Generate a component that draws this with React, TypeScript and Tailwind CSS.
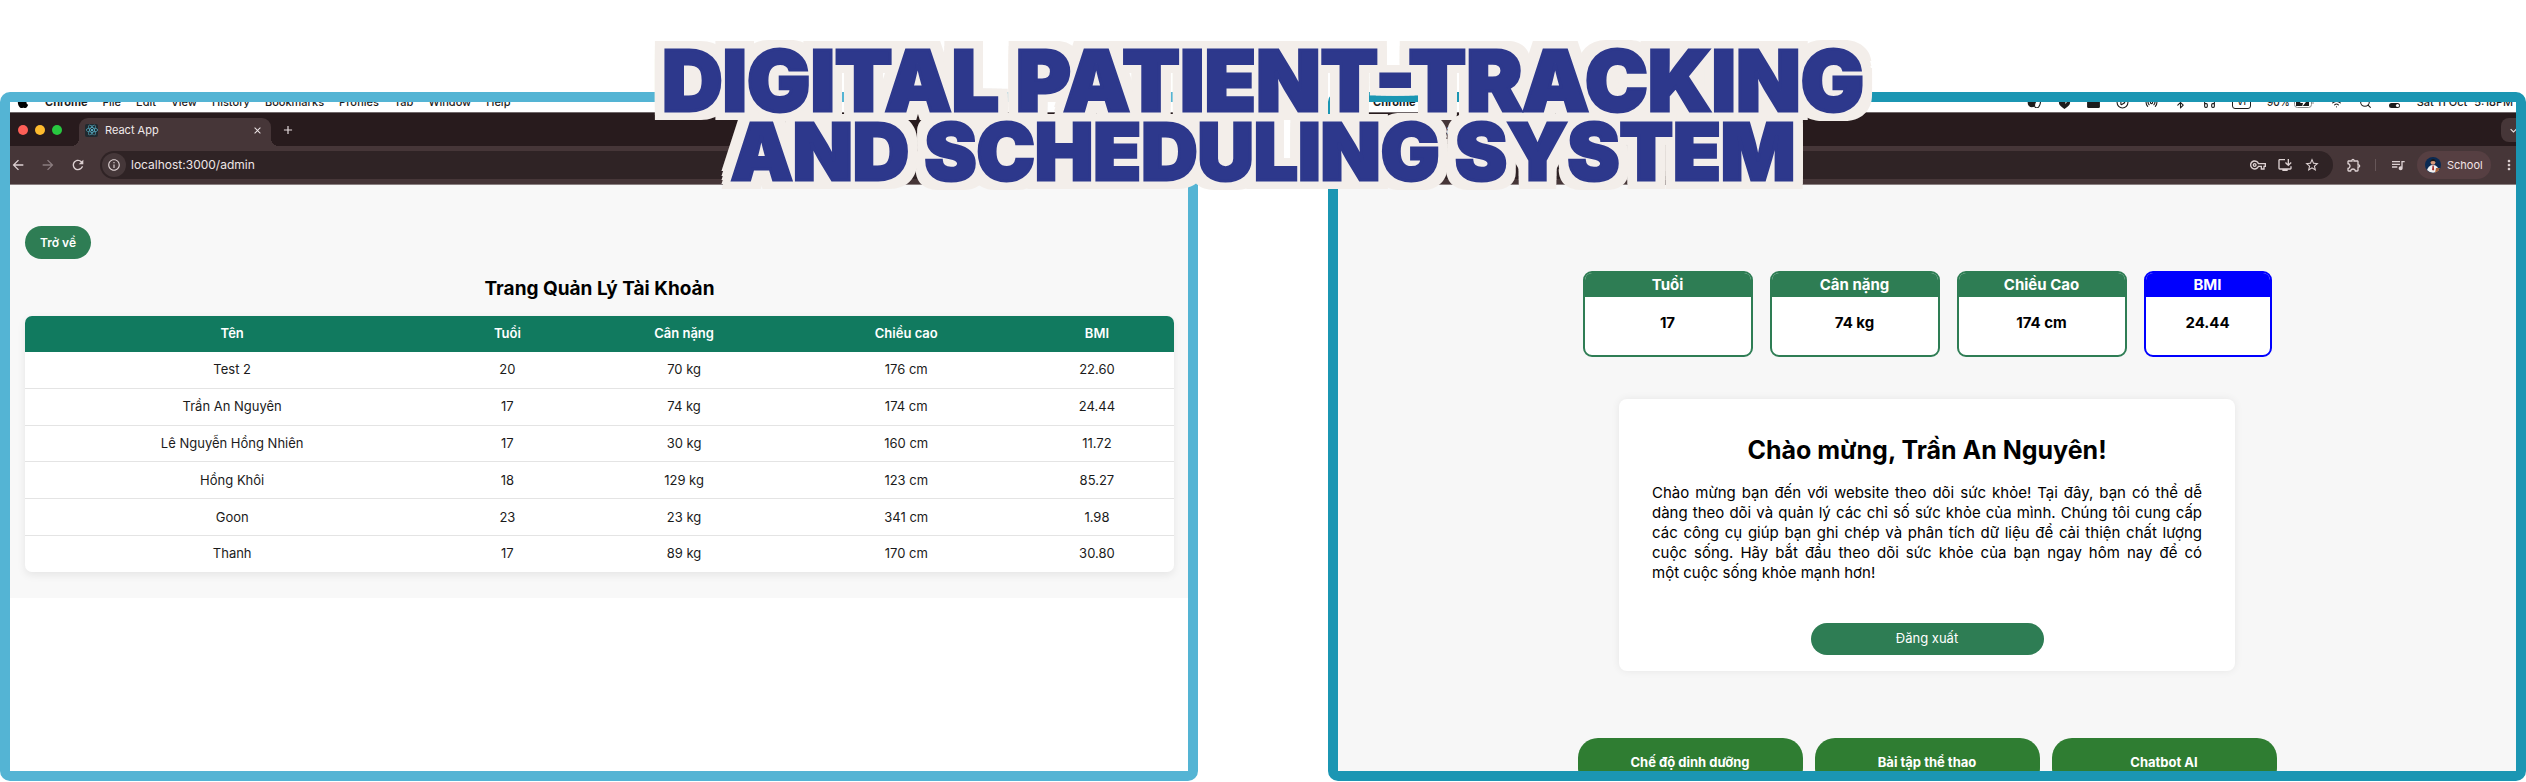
import React from "react";
import {
  MdArrowBack,
  MdArrowForward,
  MdRefresh,
  MdInfoOutline,
  MdOutlineVpnKey,
  MdOutlineInstallDesktop,
  MdStarBorder,
  MdOutlineExtension,
  MdQueueMusic,
  MdMoreVert,
  MdExpandMore,
  MdClose,
  MdAdd,
} from "react-icons/md";
import { FaApple, FaReact } from "react-icons/fa";
import {
  Bluetooth,
  CirclePlay,
  Headphones,
  Radio,
  Search,
  Wifi,
} from "lucide-react";

const allMenus = ["File", "Edit", "View", "History", "Bookmarks", "Profiles", "Tab", "Window", "Help"];

const accounts = [
  ["Test 2", "20", "70 kg", "176 cm", "22.60"],
  ["Trần An Nguyên", "17", "74 kg", "174 cm", "24.44"],
  ["Lê Nguyễn Hồng Nhiên", "17", "30 kg", "160 cm", "11.72"],
  ["Hồng Khôi", "18", "129 kg", "123 cm", "85.27"],
  ["Goon", "23", "23 kg", "341 cm", "1.98"],
  ["Thanh", "17", "89 kg", "170 cm", "30.80"],
];

function StatusItems() {
  return (
    <div className="flex items-center gap-4">
      <svg viewBox="0 0 16 14" className="h-[12px] w-[15px]">
        <circle cx="5" cy="8" r="5" fill="#1c1c1c" />
        <ellipse cx="11.5" cy="9" rx="3" ry="5" transform="rotate(20 11.5 9)" fill="#fff" stroke="#1c1c1c" strokeWidth="1.3" />
      </svg>
      <svg viewBox="0 0 14 14" className="h-[13px] w-[13px]">
        <path d="M1 1h12v6c0 3-3 5-6 7-3-2-6-4-6-7z" fill="#1c1c1c" />
        <path d="M8 2v7l3-5z" fill="#fff" />
      </svg>
      <svg viewBox="0 0 14 12" className="h-[11px] w-[13px]">
        <rect width="14" height="12" rx="1.5" fill="#1c1c1c" />
      </svg>
      <CirclePlay size={13} />
      <Radio size={13} />
      <Bluetooth size={13} />
      <Headphones size={13} />
      <span className="flex h-[13px] w-[19px] items-center justify-center rounded-[3px] border border-[#1c1c1c] text-[9px]">VI</span>
      <span className="flex items-center gap-1">
        <span className="text-[10px]">90%</span>
        <svg viewBox="0 0 20 11" className="h-[11px] w-[20px]">
          <rect x="0.5" y="0.5" width="17" height="10" rx="3" fill="#fff" stroke="#8a8a8a" />
          <path d="M2 2h13v7H2z" fill="#1c1c1c" />
          <path d="M9 1 6 6h3l-1 4 4-5H9z" fill="#fff" />
          <path d="M19 4v3" stroke="#8a8a8a" />
        </svg>
      </span>
      <Wifi size={13} />
      <Search size={13} />
      <svg viewBox="0 0 13 13" className="size-[13px]">
        <rect x="1" y="1" width="11" height="4.500" rx="2.200" fill="none" stroke="#1c1c1c" />
        <rect x="1" y="7" width="11" height="5" rx="2.500" fill="#1c1c1c" />
        <circle cx="9.500" cy="9.500" r="1.600" fill="#fff" />
      </svg>
      <span className="flex gap-[7px]">
        <span>Sat 11 Oct</span>
        <span>5:18PM</span>
      </span>
    </div>
  );
}

function MenuBar({ menus, tools }: { menus: string[]; tools: boolean }) {
  return (
    <div className="h-[11px] shrink-0 overflow-hidden border-b border-[#6f6769] bg-white">
      <div className="-mt-[11px] flex h-[22px] items-center justify-between whitespace-nowrap pr-[3px] pl-[6px] text-[11px] font-medium text-[#1c1c1c]">
        <div className="flex items-center gap-[15px]">
          <FaApple className="h-[14px] w-[14px] text-black" />
          <span className="font-bold">Chrome</span>
          {menus.map((m) => (
            <span key={m}>{m}</span>
          ))}
        </div>
        {tools && <StatusItems />}
      </div>
    </div>
  );
}

function TabStrip() {
  return (
    <div className="flex h-[33px] shrink-0 items-end justify-between overflow-hidden bg-[#281b1d]">
      <div className="flex items-end">
        <div className="flex h-8 items-center gap-[7px] pl-2">
          <span className="size-[10px] rounded-full bg-[#fe5f57]" />
          <span className="size-[10px] rounded-full bg-[#febb2e]" />
          <span className="size-[10px] rounded-full bg-[#28c840]" />
        </div>
        <div className="relative ml-[17px] flex h-7 w-[192px] items-center rounded-t-[9px] bg-[#463638] pr-2 pb-1 pl-[6px] before:absolute before:bottom-0 before:-left-2 before:size-2 before:bg-[radial-gradient(circle_at_0_0,transparent_8px,#463638_8px)] after:absolute after:-right-2 after:bottom-0 after:size-2 after:bg-[radial-gradient(circle_at_100%_0,transparent_8px,#463638_8px)]">
          <span className="flex size-[13px] items-center justify-center rounded-[2px] bg-[#20292f]">
            <FaReact className="size-[12px] text-[#5fc4dd]" />
          </span>
          <span className="ml-[7px] flex-1 text-[11px] leading-4 text-[#f0e9ea]">React App</span>
          <button aria-label="Close tab" className="text-[#f0e9ea]">
            <MdClose size={11} />
          </button>
        </div>
        <button aria-label="New tab" className="ml-[10px] flex h-8 items-center text-[#e6dcdd]">
          <MdAdd size={14} />
        </button>
      </div>
      <button aria-label="Search tabs" className="-mr-[10px] mb-1 flex h-6 w-[25px] items-center justify-center rounded-lg bg-[#463638] text-[#f0e9ea]">
        <MdExpandMore size={13} />
      </button>
    </div>
  );
}

function Toolbar({ url, tools }: { url: string; tools: boolean }) {
  return (
    <div className="flex h-[39px] shrink-0 items-center overflow-hidden border-b border-[#897f80] bg-[#463638] text-[#ddd1d2]">
      <div className="flex items-center gap-[14px] pr-[14px]">
        <button aria-label="Back"><MdArrowBack size={16} /></button>
        <button aria-label="Forward" className="text-[#8b7d7f]"><MdArrowForward size={16} /></button>
        <button aria-label="Reload"><MdRefresh size={16} /></button>
      </div>
      <div className="flex h-7 flex-1 items-center rounded-full bg-[#2f2325] pr-[13px] pl-[2px]">
        <span className="flex size-6 items-center justify-center rounded-full bg-[#453739]">
          <MdInfoOutline size={14} />
        </span>
        <input
          aria-label="Address"
          readOnly
          value={url}
          className="ml-[5px] min-w-0 flex-1 bg-transparent text-[12px] text-[#eee5e6] outline-none"
        />
        {tools && (
          <div className="flex items-center gap-[11px]">
            <MdOutlineVpnKey size={16} />
            <MdOutlineInstallDesktop size={16} />
            <MdStarBorder size={16} />
          </div>
        )}
      </div>
      {tools && (
        <div className="flex items-center">
          <button aria-label="Extensions" className="ml-[13px]"><MdOutlineExtension size={16} /></button>
          <span className="ml-[13px] h-3 w-px bg-[#665658]" />
          <button aria-label="Media" className="ml-[14px]"><MdQueueMusic size={16} /></button>
          <button className="ml-[11px] flex h-7 w-[74px] items-center gap-[6px] rounded-full bg-[#563f42] pl-2 text-[11px] text-[#f3e4e6]">
            <svg viewBox="0 0 16 16" className="size-4 shrink-0">
              <circle cx="8" cy="8" r="8" fill="#0b2a52" />
              <path d="M2 13c1-3 3-5 6-5s5 2 6 5a8 8 0 0 1-12 0z" fill="#f2f2f2" />
              <path d="M11 11l4 0a8 8 0 0 1-5 5z" fill="#a8623a" />
              <circle cx="8" cy="5.4" r="2.4" fill="#d99a7a" />
              <path d="M5.4 5c0-4 5.4-4 5.4 0-1.5-1.5-4-1.5-5.4 0z" fill="#1a1a1a" />
              <path d="M7.5 8.5h1.2l.4 4-1 1.2-1-1.2z" fill="#a02a2a" />
            </svg>
            School
          </button>
          <button aria-label="More" className="ml-[10px] w-[15px]"><MdMoreVert size={16} /></button>
        </div>
      )}
    </div>
  );
}

type FrameProps = {
  className: string;
  menus: string[];
  url: string;
  tools?: boolean;
  children: React.ReactNode;
};

function BrowserFrame({ className, menus, url, tools = false, children }: FrameProps) {
  return (
    <section className={`flex min-w-0 flex-1 flex-col overflow-hidden rounded-[10px] border-10 bg-white ${className}`}>
      <MenuBar menus={menus} tools={tools} />
      <TabStrip />
      <Toolbar url={url} tools={tools} />
      {children}
    </section>
  );
}

function AdminPage() {
  return (
    <div className="bg-[#f8f8f8] pt-[41px] pr-[14px] pb-[26px] pl-[15px]">
      <button className="h-[33px] w-[66px] rounded-[17px] bg-[#2e7d54] text-[12px] font-semibold text-white">Trở về</button>
      <h1 className="mt-4 mb-[13px] text-center text-[19px] leading-7 font-bold">Trang Quản Lý Tài Khoản</h1>
      <div className="overflow-hidden rounded-[7px] bg-white shadow-[0_3px_8px_rgba(0,0,0,0.08)]">
        <table className="h-[256px] w-full table-fixed border-collapse text-center text-[13px] text-[#1b1b1b]">
          <colgroup>
            <col className="w-[414px]" />
            <col className="w-[136px]" />
            <col className="w-[217px]" />
            <col className="w-[227px]" />
            <col className="w-[154px]" />
          </colgroup>
          <thead>
            <tr className="h-9 bg-[#117a5f] text-white">
              {["Tên", "Tuổi", "Cân nặng", "Chiều cao", "BMI"].map((h) => (
                <th key={h} className="h-9 font-semibold">{h}</th>
              ))}
            </tr>
          </thead>
          <tbody>
            {accounts.map((row) => (
              <tr key={row[0]} className="border-b border-[#e4e4e4] last:border-b-0">
                {row.map((cell, i) => (
                  <td key={i}>{cell}</td>
                ))}
              </tr>
            ))}
          </tbody>
        </table>
      </div>
    </div>
  );
}

function StatCard({ label, value, frame, head }: { label: string; value: string; frame: string; head: string }) {
  return (
    <div className={`flex h-[86px] flex-col overflow-hidden rounded-[9px] border-2 bg-white text-center text-[15px] font-bold ${frame}`}>
      <div className={`h-6 leading-6 text-white ${head}`}>{label}</div>
      <div className="mt-4 leading-5">{value}</div>
    </div>
  );
}

function HomePage() {
  return (
    <div className="flex flex-1 shrink-0 flex-col items-center bg-[#f7f7f7] pt-[86px]">
      <div className="flex gap-[17px]">
        <StatCard label="Tuổi" value="17" frame="w-[170px] border-[#2e7d54]" head="bg-[#2e7d54]" />
        <StatCard label="Cân nặng" value="74 kg" frame="w-[170px] border-[#2e7d54]" head="bg-[#2e7d54]" />
        <StatCard label="Chiều Cao" value="174 cm" frame="w-[170px] border-[#2e7d54]" head="bg-[#2e7d54]" />
        <StatCard label="BMI" value="24.44" frame="w-[128px] border-[#0000fe]" head="bg-[#0000fe]" />
      </div>
      <div className="mt-[42px] flex w-[616px] flex-col items-center rounded-[8px] bg-white px-[33px] pt-[34px] pb-4 shadow-[0_0_8px_rgba(0,0,0,0.07)]">
        <h2 className="text-[25px] leading-[34px] font-bold">Chào mừng, Trần An Nguyên!</h2>
        <p className="mt-4 text-justify text-[15px] leading-5">
          Chào mừng bạn đến với website theo dõi sức khỏe! Tại đây, bạn có thể dễ dàng theo dõi và quản lý các chỉ số
          sức khỏe của mình. Chúng tôi cung cấp các công cụ giúp bạn ghi chép và phân tích dữ liệu để cải thiện chất
          lượng cuộc sống. Hãy bắt đầu theo dõi sức khỏe của bạn ngay hôm nay để có một&nbsp;cuộc sống khỏe mạnh hơn!
        </p>
        <button className="mt-10 h-8 w-[233px] rounded-full bg-[#2e7d54] text-[13px] text-white">Đăng xuất</button>
      </div>
      <div className="mt-[67px] flex gap-3">
        {["Chế độ dinh dưỡng", "Bài tập thể thao", "Chatbot AI"].map((t) => (
          <button key={t} className="h-[50px] w-[225px] rounded-[20px] bg-[#2f7d32] text-[13px] font-bold text-white">
            {t}
          </button>
        ))}
      </div>
    </div>
  );
}

export default function App() {
  return (
    <main className="relative flex h-screen gap-[130px] overflow-hidden bg-white pt-[92px] pb-px font-['Inter',sans-serif] text-black">
      <BrowserFrame className="border-[#54b4d4]" menus={allMenus} url="localhost:3000/admin">
        <AdminPage />
      </BrowserFrame>
      <BrowserFrame className="border-[#1b96b3]" menus={["File"]} url="" tools>
        <HomePage />
      </BrowserFrame>
      <h1 className="absolute inset-x-0 top-[45px] text-center leading-[71px] font-black text-[#2d388c] [-webkit-text-stroke:3px_#2d388c] [text-shadow:11px_0_#f3eeea,-11px_0_#f3eeea,0_9px_#f3eeea,0_-9px_#f3eeea,11px_9px_#f3eeea,-11px_9px_#f3eeea,11px_-9px_#f3eeea,-11px_-9px_#f3eeea,5px_9px_#f3eeea,-5px_9px_#f3eeea,5px_-9px_#f3eeea,-5px_-9px_#f3eeea,11px_4px_#f3eeea,-11px_4px_#f3eeea,11px_-4px_#f3eeea,-11px_-4px_#f3eeea]">
        <span className="block text-[84px]">DIGITAL PATIENT-TRACKING</span>
        <span className="block text-[78px]">AND SCHEDULING SYSTEM</span>
      </h1>
    </main>
  );
}
